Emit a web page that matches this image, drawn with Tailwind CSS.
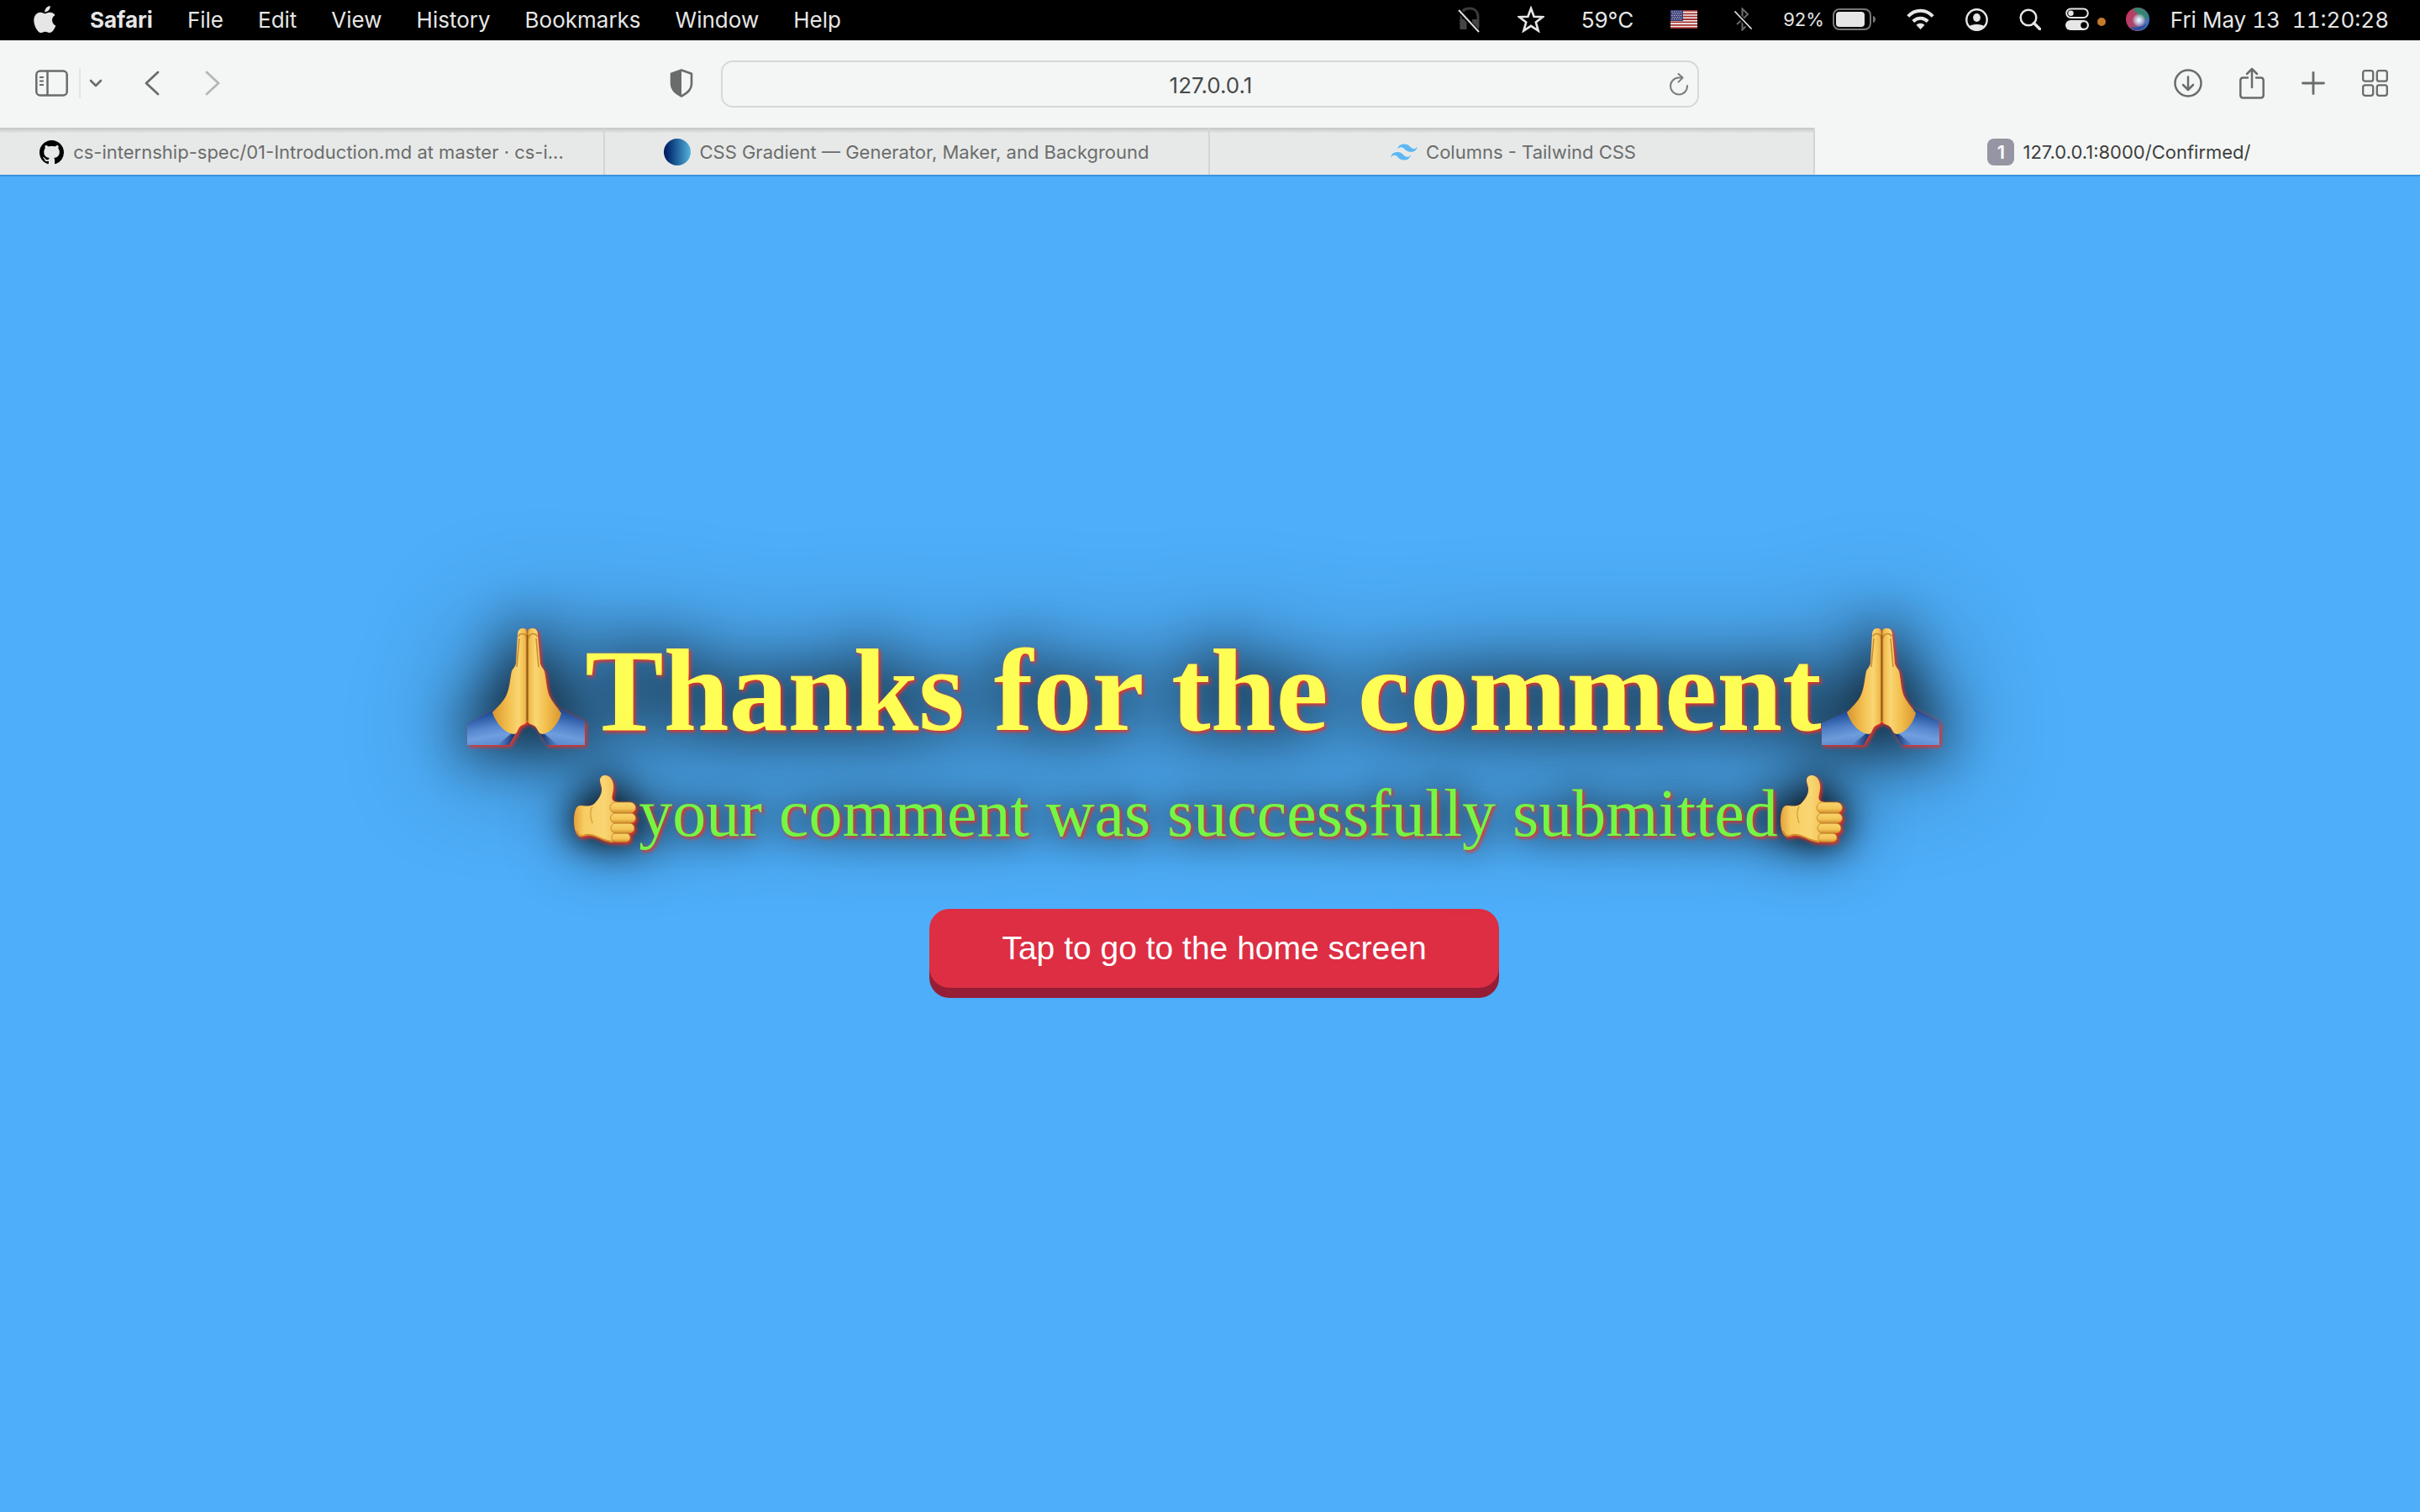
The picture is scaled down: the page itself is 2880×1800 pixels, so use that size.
<!DOCTYPE html>
<html lang="en">
<head>
<meta charset="utf-8">
<title>127.0.0.1:8000/Confirmed/</title>
<script src="https://cdn.jsdelivr.net/npm/@tailwindcss/browser@4"></script>
</head>
<body class="flex min-h-screen flex-col bg-[#4eaef9] font-[Inter,sans-serif]">

<!-- shared symbols and glow filters -->
<svg class="absolute size-0" aria-hidden="true">
  <defs>
    <filter id="glow-lg" x="-20%" y="-200%" width="140%" height="500%" color-interpolation-filters="sRGB">
      <feGaussianBlur in="SourceAlpha" stdDeviation="70" result="a"/>
      <feGaussianBlur in="SourceAlpha" stdDeviation="35" result="b"/>
      <feOffset in="SourceAlpha" dx="2" dy="2"/>
      <feGaussianBlur stdDeviation="2" result="o"/>
      <feFlood flood-color="#ff2a1a"/>
      <feComposite in2="o" operator="in" result="red"/>
      <feMerge><feMergeNode in="a"/><feMergeNode in="b"/><feMergeNode in="red"/><feMergeNode in="SourceGraphic"/></feMerge>
    </filter>
    <filter id="glow-sm" x="-20%" y="-200%" width="140%" height="500%" color-interpolation-filters="sRGB">
      <feGaussianBlur in="SourceAlpha" stdDeviation="40" result="a"/>
      <feGaussianBlur in="SourceAlpha" stdDeviation="20" result="b"/>
      <feOffset in="SourceAlpha" dx="2" dy="2"/>
      <feGaussianBlur stdDeviation="2" result="o"/>
      <feFlood flood-color="#ff2a1a"/>
      <feComposite in2="o" operator="in" result="red"/>
      <feMerge><feMergeNode in="a"/><feMergeNode in="b"/><feMergeNode in="red"/><feMergeNode in="SourceGraphic"/></feMerge>
    </filter>
    <linearGradient id="skinL" x1="0" x2="1"><stop offset="0" stop-color="#d9962f"/><stop offset=".45" stop-color="#f3c04f"/><stop offset=".75" stop-color="#f9d673"/><stop offset=".93" stop-color="#f0b94a"/><stop offset="1" stop-color="#a8651c"/></linearGradient>
    <linearGradient id="skinR" x1="1" x2="0"><stop offset="0" stop-color="#d9962f"/><stop offset=".45" stop-color="#f3c04f"/><stop offset=".75" stop-color="#f9d673"/><stop offset=".93" stop-color="#f0b94a"/><stop offset="1" stop-color="#a8651c"/></linearGradient>
    <linearGradient id="sleeveL" x1=".3" y1="0" x2=".55" y2="1"><stop offset=".1" stop-color="#1d4a98"/><stop offset=".5" stop-color="#5585cc"/><stop offset=".75" stop-color="#6f9fe0"/><stop offset="1" stop-color="#5c8bd0"/></linearGradient>
    <linearGradient id="sleeveR" x1=".7" y1="0" x2=".45" y2="1"><stop offset=".1" stop-color="#1d4a98"/><stop offset=".5" stop-color="#5585cc"/><stop offset=".75" stop-color="#6f9fe0"/><stop offset="1" stop-color="#5c8bd0"/></linearGradient>
    <linearGradient id="thumbSkin" x1="0" x2="1"><stop offset="0" stop-color="#e3a238"/><stop offset=".2" stop-color="#f7cd63"/><stop offset=".6" stop-color="#f9d673"/><stop offset="1" stop-color="#efb342"/></linearGradient>
    <linearGradient id="finger" x1="0" x2="0" y1="0" y2="1"><stop offset="0" stop-color="#f9d56d"/><stop offset=".6" stop-color="#f4c455"/><stop offset="1" stop-color="#cf8c2a"/></linearGradient>
    <linearGradient id="darkInner"><stop offset="0" stop-color="#0a2a6b" stop-opacity="0"/><stop offset="1" stop-color="#061c50"/></linearGradient>
    <linearGradient id="darkInnerR" x1="1" x2="0"><stop offset="0" stop-color="#0a2a6b" stop-opacity="0"/><stop offset="1" stop-color="#061c50"/></linearGradient>
    <symbol id="hands" viewBox="0 0 140 139">
      <path fill="url(#sleeveL)" d="M0 113 33 97 60 122 50 139H0Z"/>
      <path fill="url(#sleeveR)" d="M140 111 110 96 84 121 95 139h45Z"/>
      <path fill="url(#darkInner)" d="M36 139 54 124l6-3-10 18Z"/>
      <path fill="url(#darkInnerR)" d="M84 121l6 3 18 15H95Z"/>
      <path fill="url(#skinL)" d="M72 6C71 1 69 0 66 0c-4 0-6 3-6 8l-2 34c-1 4-4 6-5 9-2 8-2 20-7 30-3 6-9 12-16 19 4 12 13 24 25 26 4 0 4-3 7-8 3-4 8-3 10-8Z"/>
      <path fill="url(#skinR)" d="M71 6c1-5 3-6 7-6 4 0 6 3 6 8l3 34c1 4 4 6 5 9 2 8 2 20 6 30 3 6 8 12 14 20-3 12-12 23-22 25-4 0-5-3-8-8-3-4-9-3-11-8Z"/>
      <path fill="none" stroke="#c98a2b" stroke-width="1.5" d="M61 10c1-5 9-5 10 2M73 12c1-7 9-7 10-2M62 12l-3 34M82 12l3 34"/>
      <path stroke="#8f5417" stroke-width="1.6" d="M71.500 8v102"/>
    </symbol>
    <symbol id="thumb" viewBox="0 0 74 80">
      <path fill="url(#thumbSkin)" d="M7 36c5 0 12 2 17-2 4-4 8-9 9-15 1-5-2-9-2-13 0-4 3-6 6-6 6 0 9 5 10 11 1 8-3 15-1 18 2 4 10 2 14 5v38c-4 7-14 8-21 6-8-3-13-6-19-7-5-1-9 3-13 2C2 71 0 62 0 54c0-8 2-18 7-18Z"/>
      <path fill="none" stroke="#d2902d" stroke-width="2" d="M3 66c2 6 5 8 11 5 8-2 14 3 20 5 5 2 9 3 13 3"/>
      <g fill="url(#finger)" stroke="#b97822" stroke-width=".7">
        <rect x="45" y="69" width="22" height="10.500" rx="5"/>
        <rect x="44" y="57" width="28" height="12" rx="6"/>
        <rect x="43.500" y="45" width="30" height="12" rx="6"/>
        <rect x="43" y="32" width="30.500" height="13" rx="6.500"/>
      </g>
      <path fill="none" stroke="#dfa23c" stroke-width="1.500" d="M22 37c-4 6-2 14 0 20"/>
    </symbol>
  </defs>
</svg>

<!-- system menu bar -->
<header class="flex h-12 items-center justify-between bg-black pr-[37px] pb-0.5 pl-10 text-[26px] text-[#e6e6e6]">
  <nav class="flex items-center gap-[41px]">
    <svg class="h-8 w-[26px] shrink-0" viewBox="2 0 19.500 24" fill="#e6e6e6" preserveAspectRatio="none" aria-label="Apple"><path d="M12.152 6.896c-.948 0-2.415-1.078-3.96-1.04-2.04.027-3.91 1.183-4.961 3.014-2.117 3.675-.546 9.103 1.519 12.09 1.013 1.454 2.208 3.09 3.792 3.039 1.52-.065 2.09-.987 3.935-.987 1.831 0 2.35.987 3.96.948 1.637-.026 2.676-1.48 3.676-2.948 1.156-1.688 1.636-3.325 1.662-3.415-.039-.013-3.182-1.221-3.22-4.857-.026-3.04 2.48-4.494 2.597-4.559-1.429-2.09-3.623-2.324-4.39-2.376-2-.156-3.675 1.09-4.61 1.09zM15.53 3.83c.843-1.012 1.4-2.427 1.245-3.83-1.207.052-2.662.805-3.532 1.818-.78.896-1.454 2.338-1.273 3.714 1.338.104 2.715-.688 3.559-1.701"/></svg>
    <button class="font-bold">Safari</button>
    <button>File</button>
    <button>Edit</button>
    <button>View</button>
    <button>History</button>
    <button>Bookmarks</button>
    <button>Window</button>
    <button>Help</button>
  </nav>
  <div class="flex items-center gap-[37px]">
    <div class="flex items-center gap-11">
      <svg class="h-8 w-[27px]" viewBox="0 0 27 32" fill="none"><path d="M4 26V13C4 6 8 3 14 3s10 4 10 10v13" stroke="#3a3a3a" stroke-width="3"/><path d="M2.500 16h8v12h-8zM17 16h8v12h-8z" fill="#444"/><path d="M1 5l23 26" stroke="#000" stroke-width="5"/><path d="M1 5l24 26" stroke="#ddd" stroke-width="2"/></svg>
      <svg class="h-8 w-8" viewBox="0 0 32 32" fill="none" stroke="#e6e6e6" stroke-width="2.600"><path d="M16 3l3.600 9.800 10.400.4-8.200 6.400 2.900 10L16 23.800l-8.700 5.800 2.900-10L2 13.200l10.400-.4Z"/></svg>
      <span>59°C</span>
      <svg class="h-[22px] w-8" viewBox="0 0 32 22"><path fill="#f2f2f2" d="M0 0h32v22H0z"/><path stroke="#a5302f" stroke-width="1.800" d="M0 .9h32M0 4.300h32M0 7.700h32M0 11h32M0 14.400h32M0 17.800h32M0 21.100h32"/><path fill="#3b3f77" d="M0 0h15v13H0z"/><path stroke="#fff" stroke-width="1" stroke-dasharray="1 1.600" d="M1.500 2h12M2.500 4.200h11M1.500 6.400h12M2.500 8.600h11M1.500 10.800h12"/></svg>
      <svg class="h-[28px] w-[21px]" viewBox="0 0 21 28" fill="none"><path d="M3 8l13 12-6.500 6.500V1.500L16 8 3 20" stroke="#666" stroke-width="2.200"/><path d="M1 5l19 21" stroke="#000" stroke-width="5"/><path d="M1 5l19 20" stroke="#e0e0e0" stroke-width="1.800" stroke-linecap="round"/></svg>
    </div>
    <div class="flex items-center gap-[10px] text-[22px]">
      <span>92%</span>
      <svg class="h-[26px] w-[51px]" viewBox="0 0 51 26" fill="none"><rect x="1" y="1" width="44" height="24" rx="7" stroke="#777" stroke-width="2"/><rect x="4" y="4" width="34" height="18" rx="4" fill="#e6e6e6"/><path d="M48 9c4 1 4 7 0 8Z" fill="#777"/></svg>
    </div>
    <svg class="h-[26px] w-[33px]" viewBox="0 0 33 26" fill="none" stroke="#e6e6e6" stroke-width="4"><path d="M1.800 9.500C10 .5 23 .5 31.200 9.500M7.800 15.500c5-5 12.400-5 17.400 0"/><path d="M16.500 25l-5-5.200c3-2.600 7-2.600 10 0Z" fill="#e6e6e6" stroke="none"/></svg>
    <svg class="size-[27px]" viewBox="0 0 27 27"><circle cx="13.500" cy="13.500" r="12.200" fill="none" stroke="#e6e6e6" stroke-width="2.400"/><ellipse cx="13.500" cy="11" rx="4.400" ry="5" fill="#e6e6e6"/><path fill="#e6e6e6" d="M4 22c2-4 17-4 19 0-5 6-14 6-19 0Z"/></svg>
    <svg class="size-[26px]" viewBox="0 0 26 26" fill="none" stroke="#e6e6e6"><circle cx="11" cy="11" r="9.300" stroke-width="2.500"/><path d="M17.500 17.500l7 7" stroke-width="3.400" stroke-linecap="round"/></svg>
    <div class="-ml-2 flex items-center gap-6">
      <svg class="h-7 w-12" viewBox="0 0 48 28"><rect x="1.200" y="1.500" width="25.600" height="10.500" rx="5.200" fill="none" stroke="#e6e6e6" stroke-width="2"/><circle cx="6.500" cy="6.700" r="3.200" fill="#e6e6e6"/><rect x="0" y="15" width="28" height="12" rx="6" fill="#e6e6e6"/><circle cx="22" cy="21" r="3.800" fill="#000"/><circle cx="43" cy="17" r="5" fill="#c47a2c"/></svg>
      <svg class="size-7" viewBox="0 0 28 28"><defs><radialGradient id="siri"><stop offset="0" stop-color="#fff"/><stop offset=".3" stop-color="#c9d8f0"/><stop offset="1" stop-color="#fff" stop-opacity="0"/></radialGradient><linearGradient id="siriBg" x1="0" x2="1" y1=".3" y2=".6"><stop offset="0" stop-color="#c9355c"/><stop offset=".4" stop-color="#a8456d"/><stop offset="1" stop-color="#3277c9"/></linearGradient></defs><circle cx="14" cy="14" r="14" fill="url(#siriBg)"/><path d="M9 1c8-3 17 2 18 11-5 3-10 1-12-3S8 5 9 1Z" fill="#2f8a6d" opacity=".9"/><path d="M5 23c5 1 14 1 20-4-3 7-13 12-20 4Z" fill="#264fa0"/><circle cx="15.500" cy="15" r="8" fill="url(#siri)"/></svg>
    </div>
    <span class="-ml-3 whitespace-pre tabular-nums">Fri May 13  11:20:28</span>
  </div>
</header>

<!-- browser toolbar -->
<div class="grid h-[104px] grid-cols-[1fr_1164px_1fr] items-center bg-[#f4f6f5] text-[#6a6c6b]">
  <div class="flex items-center justify-between pr-[33px] pb-0.5 pl-[42px]">
    <div class="flex items-center">
      <button aria-label="Sidebar"><svg class="h-8 w-[39px]" viewBox="0 0 39 32" fill="none" stroke="currentColor" stroke-width="2.500"><rect x="1.300" y="1.500" width="36.400" height="29" rx="4.500"/><path d="M14.500 2v28"/><path d="M5 9h5M5 13.500h5M5 18h5" stroke-width="2"/></svg></button>
      <span class="ml-[13px] h-9 w-0.5 bg-[#e3e5e4]"></span>
      <button class="ml-[10px]" aria-label="Tab groups"><svg class="h-3 w-4" viewBox="0 0 16 12" fill="none" stroke="currentColor" stroke-width="2.600" stroke-linecap="round" stroke-linejoin="round"><path d="M2 3l6 6 6-6"/></svg></button>
      <button class="ml-[50px]" aria-label="Back"><svg class="h-[30px] w-[18px]" viewBox="0 0 18 30" fill="none" stroke="currentColor" stroke-width="2.800" stroke-linecap="round" stroke-linejoin="round"><path d="M16 2L2 15l14 13"/></svg></button>
      <button class="ml-[54px] text-[#b5b7b6]" aria-label="Forward"><svg class="h-[30px] w-[18px]" viewBox="0 0 18 30" fill="none" stroke="currentColor" stroke-width="2.800" stroke-linecap="round" stroke-linejoin="round"><path d="M2 2l14 13L2 28"/></svg></button>
    </div>
    <button aria-label="Privacy report"><svg class="h-[34px] w-7" viewBox="0 0 28 34"><path d="M14 1.500l12 4.200V18c0 6.500-5 11-12 14.500C7 29 2 24.500 2 18V5.700Z" fill="none" stroke="currentColor" stroke-width="2.600" stroke-linejoin="round"/><path d="M14 1.500V32.500C7 29 2 24.500 2 18V5.700Z" fill="currentColor"/></svg></button>
  </div>
  <div class="flex h-14 items-center rounded-[14px] border-2 border-[#d6d9d8] pr-[10px] pl-9">
    <input aria-label="Address" class="min-w-0 flex-1 bg-transparent pt-0.5 text-center text-[26px] text-[#484a49] outline-none" value="127.0.0.1">
    <button aria-label="Reload"><svg class="h-[27px] w-6" viewBox="0 0 24 27" fill="none" stroke="#7b7d7c" stroke-width="2" stroke-linecap="round" stroke-linejoin="round"><path d="M22 15a10 10 0 1 1-10-9.500h4"/><path d="M11.500 1l5 4.600-5 5"/></svg></button>
  </div>
  <div class="flex items-center justify-end gap-11 pr-[38px] pb-0.5">
    <button aria-label="Downloads"><svg class="size-[34px]" viewBox="0 0 34 34" fill="none" stroke="currentColor" stroke-width="2.500" stroke-linecap="round" stroke-linejoin="round"><circle cx="17" cy="17" r="15.500"/><path d="M17 9.500v15M11 19l6 6 6-6"/></svg></button>
    <button aria-label="Share"><svg class="h-[38px] w-[30px]" viewBox="0 0 30 38" fill="none" stroke="currentColor" stroke-width="2.500" stroke-linecap="round" stroke-linejoin="round"><path d="M10 12.500H4.500Q1.300 12.500 1.300 16v17q0 3.500 3.200 3.500h21q3.200 0 3.200-3.500V16q0-3.500-3.200-3.500H20"/><path d="M15 24V2M9 8l6-6 6 6"/></svg></button>
    <button aria-label="New tab"><svg class="size-7" viewBox="0 0 28 28" stroke="currentColor" stroke-width="2.800" stroke-linecap="round"><path d="M14 1.500v25M1.500 14h25"/></svg></button>
    <button aria-label="Tab overview"><svg class="h-8 w-[31px]" viewBox="0 0 31 32" fill="none" stroke="currentColor" stroke-width="2.300"><rect x="1.200" y="1.200" width="12" height="12.500" rx="2.500"/><rect x="17.800" y="1.200" width="12" height="12.500" rx="2.500"/><rect x="1.200" y="18.300" width="12" height="12.500" rx="2.500"/><rect x="17.800" y="18.300" width="12" height="12.500" rx="2.500"/></svg></button>
  </div>
</div>

<!-- tab strip -->
<nav class="grid h-14 grid-cols-4 text-[22px] text-[#6b6d6c]">
  <a href="#" class="flex items-center justify-center gap-[11px] border-r-2 border-[#d3d5d4] bg-linear-to-b from-[#c4c6c5] via-[#e7e9e8] via-12% to-[#e7e9e8] pt-0.5">
    <svg class="size-[29px]" viewBox="0 0 16 16" fill="#000"><path d="M8 0C3.580 0 0 3.580 0 8c0 3.540 2.290 6.530 5.470 7.590.4.070.55-.17.55-.38 0-.19-.01-.82-.01-1.490-2.010.37-2.530-.49-2.690-.94-.09-.23-.48-.94-.82-1.130-.28-.15-.68-.52-.01-.53.63-.01 1.080.58 1.230.82.72 1.210 1.870.87 2.330.66.07-.52.28-.87.51-1.070-1.780-.2-3.640-.89-3.640-3.950 0-.87.31-1.590.82-2.150-.08-.2-.36-1.020.08-2.120 0 0 .67-.21 2.200.82.64-.18 1.320-.27 2-.27s1.360.09 2 .27c1.530-1.040 2.200-.82 2.200-.82.44 1.100.16 1.920.08 2.120.51.56.82 1.270.82 2.150 0 3.070-1.870 3.750-3.650 3.950.29.25.54.73.54 1.480 0 1.070-.01 1.930-.01 2.200 0 .21.15.46.55.38A8.010 8.010 0 0 0 16 8c0-4.420-3.580-8-8-8Z"/></svg>
    <span>cs-internship-spec/01-Introduction.md at master · cs-i...</span>
  </a>
  <a href="#" class="flex items-center justify-center gap-[10px] border-r-2 border-[#d3d5d4] bg-linear-to-b from-[#c4c6c5] via-[#e7e9e8] via-12% to-[#e7e9e8] pt-0.5">
    <span class="size-8 rounded-full bg-linear-to-r from-[#04135c] to-[#55b4de]"></span>
    <span>CSS Gradient — Generator, Maker, and Background</span>
  </a>
  <a href="#" class="flex items-center justify-center gap-[10px] border-r-2 border-[#d3d5d4] bg-linear-to-b from-[#c4c6c5] via-[#e7e9e8] via-12% to-[#e7e9e8] pt-0.5 pl-1">
    <svg class="size-8" viewBox="0 0 24 24" fill="#5cb8f4"><path d="M12.001,4.800c-3.200,0-5.200,1.600-6,4.800c1.200-1.600,2.600-2.200,4.200-1.800c0.913,0.228,1.565,0.890,2.288,1.624C13.666,10.618,15.027,12,18.001,12c3.200,0,5.200-1.600,6-4.800c-1.200,1.600-2.600,2.200-4.200,1.800c-0.913-0.228-1.565-0.890-2.288-1.624C16.337,6.182,14.976,4.800,12.001,4.800z M6.001,12c-3.200,0-5.200,1.600-6,4.800c1.200-1.600,2.600-2.200,4.200-1.800c0.913,0.228,1.565,0.890,2.288,1.624c1.177,1.194,2.538,2.576,5.512,2.576c3.200,0,5.200-1.600,6-4.800c-1.200,1.600-2.600,2.200-4.200,1.800c-0.913-0.228-1.565-0.890-2.288-1.624C10.337,13.382,8.976,12,6.001,12z"/></svg>
    <span>Columns - Tailwind CSS</span>
  </a>
  <a href="#" aria-current="page" class="flex items-center justify-center gap-[10px] bg-[#f4f6f5] pt-0.5 pl-1 text-[#3d3f3e]">
    <span class="flex size-8 items-center justify-center rounded-lg bg-[#9695a3] font-semibold text-white">1</span>
    <span>127.0.0.1:8000/Confirmed/</span>
  </a>
</nav>

<!-- page -->
<main class="flex flex-1 flex-col items-center justify-center overflow-hidden border-t-2 border-[#3a93df] pb-20 font-['Liberation_Serif',serif] whitespace-nowrap">
  <h1 class="flex items-center pr-4 text-[140px] leading-[160px] font-bold text-[#fffe54] [filter:url(#glow-lg)]">
    <svg class="mb-[10px] h-[139px] w-[140px]" role="img" aria-label="folded hands"><use href="#hands"/></svg>
    <span>Thanks for the comment</span>
    <svg class="mb-[10px] h-[139px] w-[140px]" role="img" aria-label="folded hands"><use href="#hands"/></svg>
  </h1>
  <p class="mt-5 flex items-center gap-[3px] pr-1 text-[80px] leading-[92px] text-[#73f745] [filter:url(#glow-sm)]">
    <svg class="mb-[10px] h-20 w-[74px]" role="img" aria-label="thumbs up"><use href="#thumb"/></svg>
    <span>your comment was successfully submitted</span>
    <svg class="mb-[10px] h-20 w-[74px]" role="img" aria-label="thumbs up"><use href="#thumb"/></svg>
  </p>
  <button class="mt-[68px] mb-3 ml-[10px] h-[94px] rounded-[24px] bg-[#dd2e44] px-[86px] font-['Liberation_Sans',sans-serif] text-[39px] text-white shadow-[0_12px_0_#951d36]">Tap to go to the home screen</button>
</main>
</body>
</html>
